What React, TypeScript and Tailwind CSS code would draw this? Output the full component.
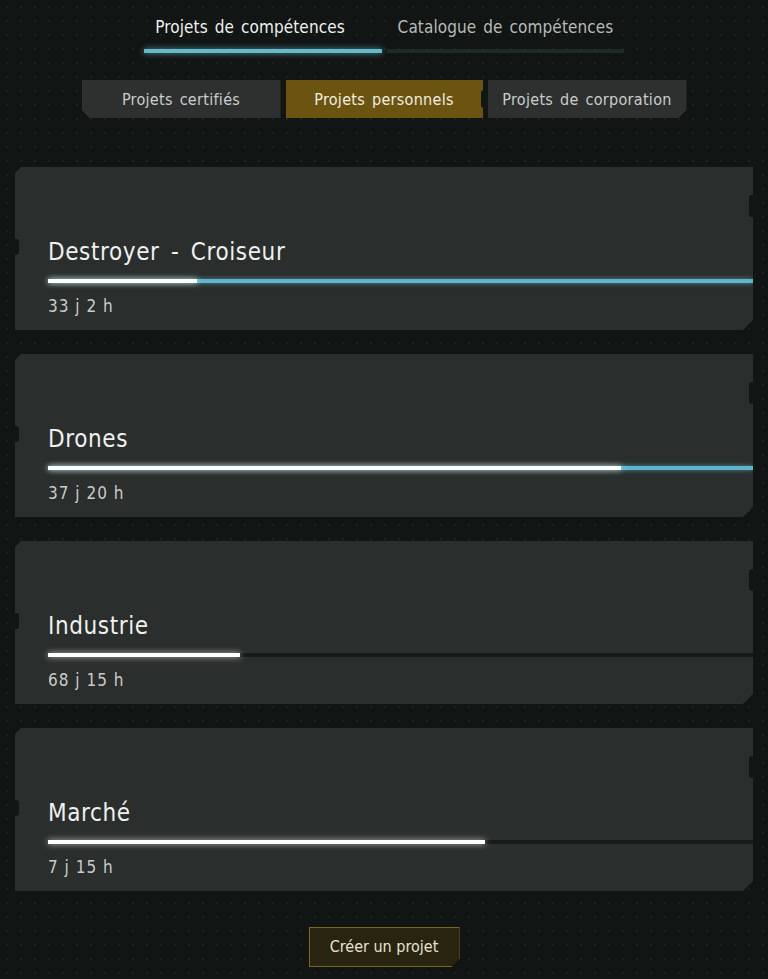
const projects = [
  { name: "Destroyer - Croiseur", time: "33 j 2 h", done: 149, queued: true },
  { name: "Drones", time: "37 j 20 h", done: 573, queued: true },
  { name: "Industrie", time: "68 j 15 h", done: 192, queued: false },
  { name: "Marché", time: "7 j 15 h", done: 437, queued: false },
];

const font = "font-['DejaVu_Sans_Condensed','DejaVu_Sans',sans-serif] font-stretch-condensed";

function SubTabs() {
  return (
    <div className="mt-[27px] flex h-[38px] items-center text-[16px] tracking-[0.3px] [word-spacing:2px]">
      <div className="flex h-full w-[199px] items-center justify-center pt-[1px] bg-[#2d302f] text-[#c9cdcb] [clip-path:polygon(0_0,100%_0,100%_100%,8px_100%,0_calc(100%-8px))]">
        Projets certifiés
      </div>
      <div className="flex w-[5px] justify-center">
        <span className="h-[18px] w-[8px] shrink-0 rounded-[3px] bg-[#121614]" />
      </div>
      <div className="flex h-full w-[197px] items-center justify-center pt-[1px] bg-[#6a5410] text-[#f1eee2]">
        Projets personnels
      </div>
      <div className="flex w-[5px] justify-center">
        <span className="h-[18px] w-[8px] shrink-0 rounded-[3px] bg-[#121614]" />
      </div>
      <div className="flex h-full w-[199px] items-center justify-center pt-[1px] bg-[#2d302f] text-[#c9cdcb] [clip-path:polygon(0_0,100%_0,100%_calc(100%-8px),calc(100%-8px)_100%,0_100%)]">
        Projets de corporation
      </div>
    </div>
  );
}

function ProjectCard({ name, time, done, queued }: (typeof projects)[number]) {
  return (
    <div className="relative h-[163px]">
      <div className="h-full bg-[#2a2e2c] pt-[71px] [clip-path:polygon(6px_0,100%_0,100%_calc(100%-10px),calc(100%-10px)_100%,0_100%,0_6px)]">
        <h2 className="ml-[33px] h-[28px] text-[24px] leading-[28px] tracking-[0.6px] text-[#eef1ef] [word-spacing:4px]">{name}</h2>
        <div className={`ml-[33px] mt-[13px] flex h-[4px] ${queued ? "bg-[#5fb6cc] shadow-[0_0_5px_rgba(95,182,204,0.7)]" : "bg-[#161a18]"}`}>
          <div
            className="h-full bg-white shadow-[0_0_6px_rgba(255,255,255,0.7)]"
            style={{ width: done }}
          />
        </div>
        <p className="ml-[33px] mt-[13px] text-[17px] leading-[20px] tracking-[1px] text-[#c8ccca]">{time}</p>
      </div>
      <span className="absolute left-[-1px] top-[72px] h-[16px] w-[5px] rounded-r-[3px] bg-[#121614]" />
      <span className="absolute right-[-1px] top-[28px] h-[22px] w-[5px] rounded-l-[3px] bg-[#121614]" />
    </div>
  );
}

export default function App() {
  return (
    <main
      className={`${font} flex min-h-[979px] flex-col items-center bg-[#111513] bg-[radial-gradient(circle,#1d2220_1px,transparent_1.5px)] bg-[length:14px_14px] pt-[15px]`}
    >
      {/* Main tabs */}
      <div className="flex gap-[5px] text-[17px] leading-[24px] tracking-[0.1px] [word-spacing:2px]">
        <div className="w-[238px]">
          <p className="pr-[26px] text-center text-[#eef1ef]">Projets de compétences</p>
          <div className="mt-[10px] h-[4px] bg-[#67b9cc] shadow-[0_0_6px_rgba(103,185,204,0.8)]" />
        </div>
        <div className="w-[237px]">
          <p className="text-center text-[#b7bbb9]">Catalogue de compétences</p>
          <div className="mt-[10px] h-[4px] bg-[#1f2a2a]" />
        </div>
      </div>

      <SubTabs />

      {/* Projects */}
      <div className="mt-[49px] flex w-full flex-col gap-[24px] px-[15px]">
        {projects.map((p) => (
          <ProjectCard key={p.name} {...p} />
        ))}
      </div>

      <button className="mt-[36px] h-[40px] w-[151px] border border-[#7a6620] bg-[#29240f] text-[16px] text-[#e6e2d2] [clip-path:polygon(0_0,100%_0,100%_calc(100%-8px),calc(100%-8px)_100%,0_100%)]">
        Créer un projet
      </button>
    </main>
  );
}
